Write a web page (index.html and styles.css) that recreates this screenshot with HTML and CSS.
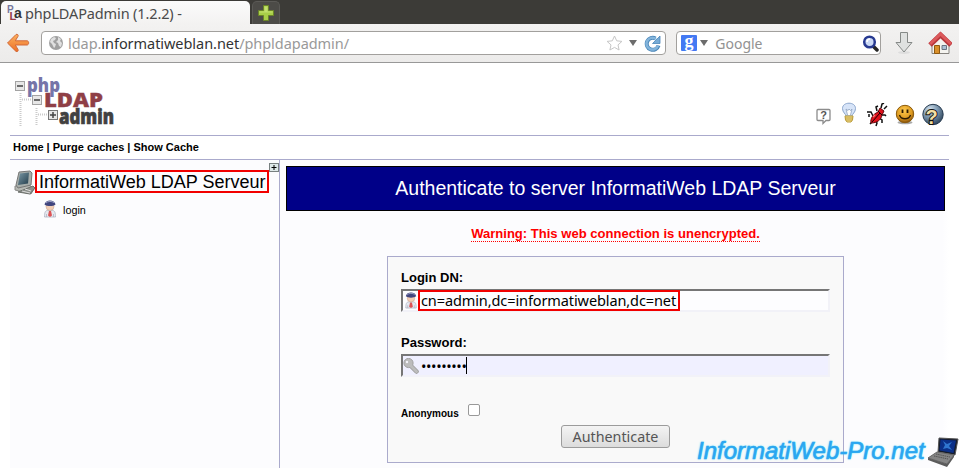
FILE: index.html
```html
<!DOCTYPE html>
<html lang="en">
<head>
<meta charset="utf-8">
<title>phpLDAPadmin (1.2.2) -</title>
<link rel="stylesheet" href="styles.css">
</head>
<body>
<svg class="defs" width="0" height="0" aria-hidden="true">
  <defs>
    <linearGradient id="orange" x1="0" y1="0" x2="0" y2="1"><stop offset="0" stop-color="#fbb25f"/><stop offset="1" stop-color="#ee6f26"/></linearGradient>
    <linearGradient id="screen" x1="0" y1="0" x2="1" y2="1"><stop offset="0" stop-color="#7b98a6"/><stop offset="1" stop-color="#223d4b"/></linearGradient>
    <radialGradient id="smile" cx=".45" cy=".3" r=".7"><stop offset="0" stop-color="#ffc94d"/><stop offset=".65" stop-color="#dd9a20"/><stop offset="1" stop-color="#875009"/></radialGradient>
    <radialGradient id="ball" cx=".35" cy=".25" r=".8"><stop offset="0" stop-color="#d3e2ee"/><stop offset=".5" stop-color="#7893ab"/><stop offset="1" stop-color="#2c4258"/></radialGradient>
    <symbol id="user" viewBox="0 0 14 18">
      <path d="M1.500 17c0-4 .5-6.500 3-6.500h5c2.500 0 3 2.500 3 6.500z" fill="#e5e9f0" stroke="#b1b4c3" stroke-width=".8"/>
      <path d="M3.500 14v3M10.500 14v3" stroke="#b0b4c3" stroke-width=".8"/>
      <path d="M6 11h2l1 4.500-2 1.500-2-1.500z" fill="#dd5355"/>
      <circle cx="7" cy="6.500" r="4" fill="#f2cdb4" stroke="#c9a795" stroke-width=".6"/>
      <path d="M1.500 4.500C2 1.500 4.500.4 7 .4s5 1.100 5.500 4.100C10 6.500 4 6.500 1.500 4.500z" fill="#41457e"/>
      <path d="M3 3c1.500-2 6-2 8-.4" stroke="#9ca1c5" fill="none"/>
    </symbol>
  </defs>
</svg>

<header class="browser">
  <div class="tabs">
    <div class="tab">
      <svg class="favicon" width="16" height="16" viewBox="0 0 16 16">
        <text x="0" y="8" class="fav fav-p">P</text><text x="2.500" y="14.500" class="fav fav-l">L</text><text x="7" y="12.500" class="fav fav-a">a</text>
      </svg>
      <span class="tab-title">phpLDAPadmin (1.2.2) -</span>
    </div>
    <div class="new-tab">
      <svg width="18" height="18" viewBox="0 0 18 18"><path d="M6.500 1.500h5v5h5v5h-5v5h-5v-5h-5v-5h5z" fill="#a9cf48" stroke="#6b8528"/><path d="M7.500 2.500h3v5h5v1h-13v-1h5z" fill="#c3e06f"/></svg>
    </div>
  </div>
  <div class="toolbar">
    <svg class="back" width="24" height="20" viewBox="0 0 24 20"><path d="M10 1.500c1.300-.8 2.700.5 2 1.800L9.300 7.800H21c2.200 0 2.200 4.200 0 4.200H9.300l2.700 4.500c.7 1.300-.7 2.700-2 1.900L1.500 10z" fill="url(#orange)" stroke="#d2693a"/></svg>
    <div class="field url">
      <svg class="globe" width="16" height="16" viewBox="0 0 16 16"><circle cx="8" cy="8" r="7" fill="#a0a0a0"/><path d="M3 4l3-2 2 1-1 2-2 1 1 2 2 1-1 3-1 1-2-4-2-2zM10 2l3 2-1 2 2 2-1 4-2-1-1-3-2-1 2-2z" fill="#e0e0e0"/></svg>
      <span class="address">ldap.<b>informatiweblan.net</b>/phpldapadmin/</span>
      <svg class="star" width="17" height="16" viewBox="0 0 17 16"><path d="M8.500 1l2.200 4.800 5.200.6-3.900 3.500 1.100 5.100-4.600-2.600L3.900 15 5 9.900 1.100 6.400l5.200-.6z" fill="#fff" stroke="#c6c6c6"/></svg>
      <i class="caret"></i>
      <svg class="reload" width="17" height="17" viewBox="0 0 17 17"><path d="M14.500 10.500A6 6 0 1 1 11.500 3.500" fill="none" stroke="#4b87b9" stroke-width="4"/><path d="M14 10.500A5.900 5.900 0 1 1 12 4" fill="none" stroke="#83b4db" stroke-width="2.500"/><path d="M16 1v7.500H8.500z" fill="#76abd6" stroke="#4b87b9" stroke-width=".8"/></svg>
    </div>
    <div class="field search">
      <svg width="16" height="16" viewBox="0 0 16 16"><rect width="16" height="16" rx="1" fill="#4379f3"/><text x="8" y="11.500" class="g">g</text></svg>
      <i class="caret"></i>
      <span class="hint">Google</span>
      <svg class="lens" width="17" height="17" viewBox="0 0 17 17"><path d="M11 11l4 4" stroke="#252525" stroke-width="3.500" stroke-linecap="round"/><circle cx="7.500" cy="7" r="5.300" fill="#cbd9f5" stroke="#283a91" stroke-width="2.500"/><path d="M5 7c0-2 1-3 3-3" stroke="#fff" fill="none" stroke-width="1.500"/></svg>
    </div>
    <svg class="down" width="20" height="24" viewBox="0 0 20 24"><ellipse cx="10" cy="21.500" rx="6" ry="1.500" fill="#ddd"/><path d="M6.500 1.500h7v10h4.500l-8 9.500-8-9.500h4.500z" fill="#dfe1e0" stroke="#858987"/></svg>
    <svg class="home" width="24" height="24" viewBox="0 0 24 24"><path d="M4 11v11.500h17V11l-8.500-8z" fill="#f4f3ef" stroke="#85827e"/><path d="M2 14L12.500 4 23 14" fill="none" stroke="#b9373c" stroke-width="5"/><path d="M2 13L12.500 3 23 13" fill="none" stroke="#dc5a5c" stroke-width="3"/><path d="M6.500 14.500h5v8h-5z" fill="#d9902a" stroke="#8e5911"/><path d="M14 14.500h4.500v4H14z" fill="#abc0d4" stroke="#6a7480"/></svg>
  </div>
</header>

<div class="page">
  <div class="masthead">
    <svg class="logo" width="106" height="54" viewBox="0 0 106 54">
      <path d="M7.500 17v33M23.500 32v18M9 23.500h9M25 38.500h10" stroke="#ccc" stroke-width="2" stroke-dasharray="1 1" fill="none"/>
      <g fill="#e7e7e7" stroke="#a3a3a3"><rect x="2.500" y="5.500" width="9" height="9"/><rect x="19.500" y="19.500" width="9" height="9"/><rect x="35.500" y="34.500" width="9" height="9" stroke="#777"/></g>
      <path d="M4 10h6M21 24h6M37 39h6M40 36v6" stroke="#444" stroke-width="1.500"/>
      <text x="14" y="16" textLength="33" lengthAdjust="spacingAndGlyphs" class="lg lg-php">php</text>
      <text x="31" y="30.500" textLength="59" lengthAdjust="spacingAndGlyphs" class="lg lg-ldap">LDAP</text>
      <text x="46" y="48" textLength="55" lengthAdjust="spacingAndGlyphs" class="lg lg-admin">admin</text>
    </svg>
    <div class="tools">
      <svg width="16" height="18" viewBox="0 0 16 18"><path d="M2 1.500h11q1 0 1 1v9q0 1-1 1h-3l-3 3v-3H2q-1 0-1-1v-9q0-1 1-1z" fill="#fff" stroke="#8c8c8c" stroke-width="1.300"/><text x="7.500" y="11" class="q q-s">?</text></svg>
      <svg width="16" height="24" viewBox="0 0 16 24"><path d="M5 14c0-2-3.500-3.500-3.500-7.500C1.500 3 4.500 1.200 8 1.200s6.500 1.800 6.500 5.300c0 4-3.500 5.500-3.500 7.500z" fill="#d7e4f8" stroke="#8aa5cc"/><path d="M6.500 13L5 7l2 1.500L8 7l1.500 1.500L11 7l-1.500 6" fill="#fff" stroke="#8fa3c0" stroke-width=".8"/><path d="M4 14h8l-.5 4-1.500 2H6l-1.500-2z" fill="#f5df8b" stroke="#b99a38"/><path d="M4 16h8M5 18h6" stroke="#bd9c3c"/></svg>
      <svg width="22" height="24" viewBox="0 0 22 24"><path d="M1 9h4l2 4M3 14v-3M4 21l3-3M10 23l1-3-1-2M11 8L10 4l2-1M15 5l1-4 2-1M18 6l3-3M15 12h4l1 1M13 15l3 2v3" fill="none" stroke="#111" stroke-width="1.500"/><path d="M5 20c-1-4 2-9 7-11l2-4 4 3-2 4c-1 5-5 8-11 8z" fill="#e0101b" stroke="#61050a"/><path d="M6 19l8-9M12 8l4 4" stroke="#160000"/><path d="M7 14l2-2" stroke="#ff7777" stroke-width="1.500"/></svg>
      <svg width="20" height="22" viewBox="0 0 20 22"><ellipse cx="10" cy="18.500" rx="7.500" ry="1.800" fill="#aaa"/><circle cx="10" cy="10" r="8.700" fill="url(#smile)" stroke="#8b5a0a"/><path d="M7.500 5.500v3.500M12.500 5.500v3.500" stroke="#2b1a02" stroke-width="1.800"/><path d="M4.500 11c1.500 5 9.500 5 11 0" fill="none" stroke="#2b1a02" stroke-width="1.300"/></svg>
      <svg width="22" height="24" viewBox="0 0 22 24"><circle cx="11" cy="11.500" r="10.200" fill="url(#ball)" stroke="#273b50"/><text x="9.500" y="20.500" class="q q-l">?</text></svg>
    </div>
  </div>
  <nav>Home | Purge caches | Show Cache</nav>

  <div class="columns">
    <aside>
      <div class="server">
        <svg width="22" height="25" viewBox="0 0 22 25"><path d="M1 16l14-1 5 4-3 5L1 20z" fill="#b5b8b3" stroke="#888"/><path d="M5 2l11-1 2 2-1 12-13 3-2-3z" fill="#a6adaa" stroke="#777"/><path d="M6 3.500l9-1-1 11-10 1.500z" fill="url(#screen)"/><path d="M9 20l10-4 2 2-5 6-12-2z" fill="#8d918d" stroke="#6c706c"/><path d="M8 21l8 2M11 19l6 2" stroke="#ddd"/></svg>
        <span class="mark server-name">InformatiWeb LDAP Serveur</span>
      </div>
      <div class="login"><svg width="14" height="18"><use href="#user"/></svg><span>login</span></div>
      <svg class="expand" width="10" height="9" viewBox="0 0 10 9"><rect x=".5" y=".5" width="9" height="8" fill="#dfe9e9" stroke="#788080"/><path d="M2.500 4.500h5M5 2v5" stroke="#000"/></svg>
    </aside>
    <main>
      <h1>Authenticate to server InformatiWeb LDAP Serveur</h1>
      <p class="warning"><span>Warning: This web connection is unencrypted.</span></p>
      <form>
        <label>Login DN:</label>
        <div class="entry"><svg width="14" height="17"><use href="#user"/></svg><span class="mark dn">cn=admin,dc=informatiweblan,dc=net</span></div>
        <label>Password:</label>
        <div class="entry active"><svg width="16" height="16" viewBox="0 0 16 16"><path d="M7 7l6.500 6.500" stroke="#999" stroke-width="4.500" stroke-linecap="round"/><circle cx="5.500" cy="5" r="4.600" fill="#bcbcbc" stroke="#a2a2a2"/><path d="M7 7l6.500 6.500" stroke="#bdbdbd" stroke-width="3" stroke-linecap="round"/><circle cx="4" cy="4" r="1.200" fill="#f4f4fb"/></svg><span class="dots">•••••••••</span><i class="cursor"></i></div>
        <div class="anon"><span>Anonymous</span><i class="check"></i></div>
        <div class="submit"><button type="button">Authenticate</button></div>
      </form>
    </main>
  </div>
</div>

<div class="watermark">
  <span>InformatiWeb-Pro.net</span>
  <svg width="32" height="31" viewBox="0 0 32 31"><path d="M12 1l19 1-3 16-17-3z" fill="#161c2b" stroke="#555"/><path d="M13.500 2.500l15.500 1-2.500 12.500-14-2.500z" fill="#0b2f88"/><path d="M16 4l4 3 5-2-3 4 3 4-5-2-4 1 2-4z" fill="#2f75d0"/><path d="M10 15l17 3-7 9L1 21z" fill="#858585" stroke="#666"/><path d="M9 17l14 3M7 19l14 3" stroke="#555" stroke-dasharray="1.500 .7"/><path d="M1 21l19 6 7-9v2l-7 10L1 23z" fill="#5b5b5b"/></svg>
</div>
</body>
</html>
```
FILE: styles.css
```css
* { box-sizing: border-box; }
body { margin: 0; width: 959px; height: 468px; overflow: hidden; background: #fff; font-family: "Liberation Sans", sans-serif; color: #000; }
svg { display: block; flex: none; }
.defs { position: absolute; }

.browser { height: 63px; border-bottom: 1px solid #989898; font-family: "Noto Sans", sans-serif; }
.tabs { display: flex; height: 24px; padding: 1px 0 0 1px; background: #3c3b37; }
.tab { display: flex; align-items: center; width: 249px; padding-left: 6px; border-radius: 5px 5px 0 0; background: linear-gradient(#fbfbfb, #f3f2f1); color: #4a4a4a; font-size: 14.5px; }
.favicon { margin-right: 2px; }
.tab-title { width: 170px; letter-spacing: -.13px; white-space: nowrap; }
.fav { font: bold 9px "Liberation Sans", sans-serif; }
.fav-p { fill: #77779d; font-size: 10px; }
.fav-l { fill: #963c48; font-size: 11px; }
.fav-a { fill: #333; font-size: 14px; }
.new-tab { display: flex; justify-content: center; align-items: center; width: 28px; margin-left: 2px; border: 1px solid #5b5a56; border-bottom: 0; border-radius: 5px 5px 0 0; background: #4c4b47; }
.toolbar { display: flex; align-items: center; height: 38px; padding: 0 7px 0 6px; background: linear-gradient(#f3f2f1, #ecebea); }
.field { display: flex; align-items: center; height: 24px; border: 1px solid #a2a09d; border-radius: 4px; background: #fff; }
.url { width: 626px; margin-left: 11px; padding: 0 4px 0 6px; }
.address { flex: 1; margin-left: 4px; color: #999; font-size: 14.5px; letter-spacing: -.05px; white-space: nowrap; }
.address b { color: #333; font-weight: 400; }
.caret { width: 0; border: 4px solid transparent; border-top: 6px solid #6c6c6c; border-bottom: 0; }
.star { margin-right: 6px; }
.reload { margin-left: 7px; }
.search { width: 205px; margin-left: 10px; padding: 0 1px 0 4px; }
.search .caret { margin-left: 3px; }
.g { fill: #fff; font: bold 18px "Liberation Serif", serif; text-anchor: middle; }
.hint { flex: 1; margin-left: 7px; color: #929292; font-size: 14px; }
.down { margin-left: 13px; }
.home { margin-left: 14px; }

.page { padding: 0 10px; }
.masthead { display: flex; justify-content: space-between; height: 72px; }
.logo { margin: 13px 0 0 3px; }
.lg { font-family: "Open Sans", sans-serif; font-weight: 800; }
.lg-php { fill: #7675a8; font-size: 19px; }
.lg-ldap { fill: #8f3f46; stroke: #8f3f46; stroke-width: .4; font-size: 20px; }
.lg-admin { fill: #414141; stroke: #414141; stroke-width: .7; font-size: 21px; }
.tools { display: flex; align-items: center; gap: 7px; padding: 28px 5px 0 0; }
.tools svg:nth-child(1) { margin: 8px 2px 0 0; }
.tools svg:nth-child(2) { margin: 2px 2px 0 0; }
.tools svg:nth-child(3), .tools svg:nth-child(4), .tools svg:nth-child(5) { margin-top: 3px; }
.q { text-anchor: middle; font-weight: bold; }
.q-s { font-size: 11px; fill: #555; }
.q-l { font-size: 20px; fill: #f3dfa2; stroke: #111; stroke-width: 1.8px; paint-order: stroke; }
nav { height: 25px; padding-left: 3px; border: solid #aaaacc; border-width: 1px 0; font-size: 11px; font-weight: bold; line-height: 23px; }
.columns { display: flex; height: 308px; }
aside { position: relative; width: 270px; padding: 9px 0 0 4px; border-right: 1px solid #aaaacc; background: #fcfcfe; }
.server { display: flex; align-items: center; height: 26px; }
.mark { border: 2px solid #ff0000; border-color: #f20000; white-space: nowrap; }
.server-name { width: 234px; height: 23px; margin: -1px 0 0 -1px; padding-left: 2px; font-size: 18px; line-height: 20px; }
.login { display: flex; align-items: center; gap: 6px; height: 18px; margin: 5px 0 0 29px; font-size: 10.8px; }
.login span { padding-top: 1px; }
.expand { position: absolute; right: 0; top: 3px; }
main { width: 669px; padding: 6px 4px 0 6px; background: linear-gradient(90deg, #fcfcfe 99%, #fff); }
h1 { height: 45px; margin: 0; border: 1px solid #000; background: #000088; color: #fff; font-size: 19.5px; font-weight: 400; line-height: 43px; text-align: center; }
.warning { display: flex; justify-content: center; height: 45px; margin: 0; padding-top: 15px; color: #ff0000; font-size: 13.05px; font-weight: bold; }
.warning span { height: 16px; border-bottom: 1px dotted #ff0000; line-height: 16px; }
form { width: 457px; height: 207px; margin: 0 auto; padding: 13px; border: 1px solid #aaaacc; background: #f9f9f9; }
label { display: block; height: 19px; font-size: 13px; font-weight: bold; line-height: 15px; }
.entry { display: flex; align-items: center; width: 429px; height: 23px; margin-bottom: 23px; border: 2px solid; border-color: #767676 #f2f2f8 #f2f2f8 #767676; background: #fdfdff; font: 14.5px "Noto Sans", sans-serif; }
.entry > svg { width: 16px; }
.entry.active { background: #f0f0ff; }
.dn { width: 262px; height: 21px; margin-left: -1px; padding-left: 1px; letter-spacing: -.1px; line-height: 17px; }
.dots { margin-left: 2px; letter-spacing: -.4px; }
.cursor { width: 1px; height: 17px; background: #000; }
.anon { display: flex; align-items: center; height: 20px; font-size: 10px; font-weight: bold; }
.anon span { padding-top: 6px; }
.check { width: 12px; height: 12px; margin: 0 0 0 9px; border: 1px solid #999; border-radius: 2px; background: #fff; }
.submit { display: flex; justify-content: center; margin-top: 5px; }
button { width: 109px; height: 23px; padding: 0; border: 1px solid #9c9c9c; border-radius: 3px; background: linear-gradient(#f4f4f4, #dcdcdc); color: #555; font: 14.3px/20px "Noto Sans", sans-serif; }
.watermark { position: absolute; left: 697px; top: 437px; display: flex; width: 262px; }
.watermark span { width: 230px; color: #2aa6f0; font-size: 24px; -webkit-text-stroke: .6px #2aa6f0; font-style: italic; line-height: 27px; white-space: nowrap; text-shadow: 0 0 2px #46e1ff; }
```
